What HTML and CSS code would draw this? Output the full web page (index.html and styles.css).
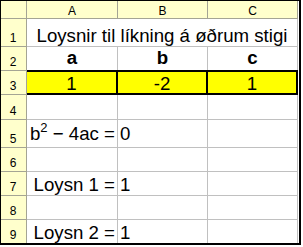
FILE: index.html
```html
<!DOCTYPE html>
<html lang="fo">
<head>
<meta charset="utf-8">
<title>Loysnir til líkning á øðrum stigi</title>
<link rel="stylesheet" href="styles.css">
</head>
<body>
<div class="sheet">
  <div class="corner"></div>
  <div class="ch">A</div>
  <div class="ch">B</div>
  <div class="ch">C</div>

  <div class="rh">1</div>
  <div class="cell merged center r1">Loysnir til líkning á øðrum stigi</div>

  <div class="rh">2</div>
  <div class="cell center bold r2">a</div>
  <div class="cell center bold r2">b</div>
  <div class="cell center bold r2">c</div>

  <div class="rh">3</div>
  <div class="cell center hl r3">1</div>
  <div class="cell center hl r3">-2</div>
  <div class="cell center hl r3">1</div>

  <div class="rh">4</div>
  <div class="cell"></div>
  <div class="cell"></div>
  <div class="cell"></div>

  <div class="rh">5</div>
  <div class="cell right r5"><span class="formula">b<sup class="sq">2</sup> − 4ac =</span></div>
  <div class="cell left r5">0</div>
  <div class="cell"></div>

  <div class="rh">6</div>
  <div class="cell"></div>
  <div class="cell"></div>
  <div class="cell"></div>

  <div class="rh">7</div>
  <div class="cell right r7">Loysn 1 =</div>
  <div class="cell left r7">1</div>
  <div class="cell"></div>

  <div class="rh">8</div>
  <div class="cell"></div>
  <div class="cell"></div>
  <div class="cell"></div>

  <div class="rh last">9</div>
  <div class="cell right r7 last">Loysn 2 =</div>
  <div class="cell left r7 last">1</div>
  <div class="cell last"></div>
</div>
</body>
</html>
```

FILE: styles.css
```css
html, body {
  margin: 0;
  padding: 0;
  background: #ffffff;
}

.sheet {
  display: grid;
  grid-template-columns: 26px 91px 90px 90px;
  grid-template-rows: 18px 28px 24px 24px 25px 28px 24px 24px 24px 23px;
  width: max-content;
  border-top: 1px solid #000;
  border-left: 1px solid #000;
  border-right: 2px solid #000;
  border-bottom: 2px solid #000;
  padding-right: 1px;
  background: #ffffff;
  font-family: "Liberation Sans", Arial, sans-serif;
  color: #000;
}

.corner,
.ch,
.rh {
  background: #ffffcc;
  border-right: 1px solid #a4a494;
  border-bottom: 1px solid #a4a494;
  font-size: 12px;
  line-height: 12px;
  display: flex;
}

.ch {
  justify-content: center;
  align-items: flex-end;
  padding-bottom: 1px;
}

.rh {
  justify-content: center;
  align-items: flex-end;
  padding-bottom: 2px;
  padding-right: 1px;
}

.rh.last {
  border-bottom: none;
}

.cell {
  border-right: 1px solid #c0c0c0;
  border-bottom: 1px solid #c0c0c0;
  font-size: 18.67px;
  line-height: 18px;
  white-space: nowrap;
  display: flex;
  align-items: flex-end;
  padding-bottom: 1px;
}

.cell.last {
  border-bottom: none;
}

.merged {
  grid-column: span 3;
}

.center {
  justify-content: center;
}

.right {
  justify-content: flex-end;
  padding-right: 2px;
}

.left {
  justify-content: flex-start;
  padding-left: 2px;
}

.bold {
  font-weight: bold;
}

.hl {
  background: #ffff00;
  border-top: 2px solid #000;
  border-bottom: 2px solid #000;
  border-right: 2px solid #000;
  margin-top: -1px;
  padding-bottom: 0;
}

.r2 {
  padding-bottom: 3px;
}

.r5 {
  padding-bottom: 4px;
}

.r7 {
  padding-bottom: 1px;
}

.formula {
  line-height: 18px;
}

.sq {
  font-size: 13px;
  line-height: 0;
  vertical-align: 8px;
}
```
